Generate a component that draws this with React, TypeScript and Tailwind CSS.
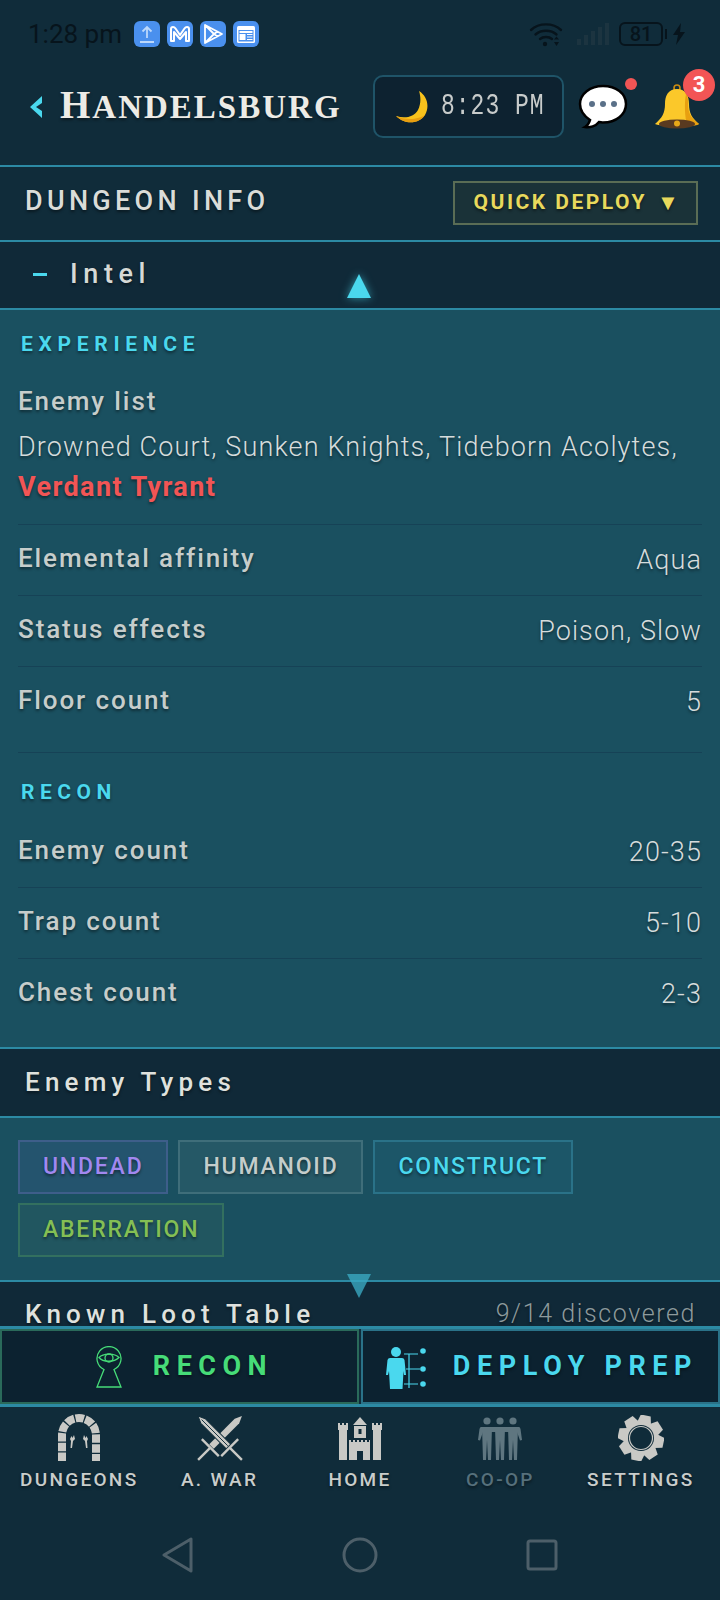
import React from 'react';

const ui = "font-['Roboto',sans-serif]";
const shadow = '[text-shadow:0_2px_3px_rgba(0,0,0,0.45)]';

const StatusApps = () => (
  <div className="flex gap-[7px] ml-[12px]">
    <div className="w-[26px] h-[26px] rounded-[6px] bg-[#4a90ee] flex items-center justify-center">
      <svg width="20" height="20" viewBox="0 0 20 20" fill="none" stroke="#bcd8fb" strokeWidth="1.8">
        <path d="M10 14V3M5.5 7.5 10 3l4.5 4.5M3 18h14" />
      </svg>
    </div>
    <div className="w-[26px] h-[26px] rounded-[6px] bg-[#4a90ee] flex items-center justify-center">
      <svg width="22" height="20" viewBox="0 0 22 20" fill="none" stroke="#fff" strokeWidth="2" strokeLinejoin="round">
        <path d="M2 17V5q0-2 2-2 1.500 0 2.500 1.500L11 11l4.500-6.500Q16.500 3 18 3q2 0 2 2v12h-3V8l-6 7-6-7v9z" />
      </svg>
    </div>
    <div className="w-[26px] h-[26px] rounded-[6px] bg-[#4a90ee] flex items-center justify-center">
      <svg width="22" height="24" viewBox="0 0 22 24" fill="none" stroke="#fff" strokeWidth="1.8" strokeLinejoin="round">
        <path d="M3 3v18l17-9zM3 3l9 9-9 9M12 12l3.500-2.500M12 12l3.500 2.500" />
      </svg>
    </div>
    <div className="w-[26px] h-[26px] rounded-[6px] bg-[#4a90ee] flex items-center justify-center">
      <svg width="20" height="20" viewBox="0 0 20 20">
        <rect x="1" y="2" width="18" height="17" rx="1.500" fill="#fff" />
        <rect x="2.500" y="6" width="15" height="11.500" fill="#4a90ee" />
        <rect x="3.500" y="7" width="13" height="2" fill="#fff" />
        <rect x="3.500" y="10" width="6" height="6" fill="#fff" />
        <path d="M11 10.500h5.500M11 13h5.500M11 15.500h5.500" stroke="#fff" strokeWidth="1.200" />
      </svg>
    </div>
  </div>
);

const StatusRight = () => (
  <div className="flex items-center text-[#07141c]">
    <svg width="34" height="26" viewBox="0 0 34 26" fill="none" stroke="currentColor" strokeWidth="2.400" strokeLinecap="round">
      <path d="M2 9c8-7.500 22-7.500 30 0M6.500 13.500c5.500-5 15.500-5 21 0M11 18c3-2.600 9-2.600 12 0" />
      <circle cx="16" cy="23" r="2.200" fill="currentColor" stroke="none" />
      <path d="M25 18.500h5l-2.500-3zM25 21h5l-2.500 4z" fill="currentColor" stroke="none" />
    </svg>
    <svg width="34" height="22" viewBox="0 0 34 22" className="ml-[14px]" fill="#1c3440">
      <rect x="0" y="16" width="4" height="6" />
      <rect x="7" y="12" width="4" height="10" />
      <rect x="14" y="8" width="4" height="14" />
      <rect x="21" y="4" width="4" height="18" />
      <rect x="28" y="0" width="4" height="22" />
    </svg>
    <div className="ml-[8px] w-[44px] h-[24px] rounded-[6px] border-[2.500px] border-[#07141c] flex items-center justify-center text-[20px] font-medium leading-none">81</div>
    <div className="w-[2px] h-[10px] bg-[#07141c] ml-[2px]" />
    <svg width="14" height="22" viewBox="0 0 14 22" className="ml-[5px]" fill="currentColor">
      <path d="M9 0 1 12h5l-2 10 9-13H8z" />
    </svg>
  </div>
);

const Moon = () => (
  <svg width="36" height="34" viewBox="0 0 36 34">
    <path d="M24 1c8 5 11 15 6 24-5 8-19 11-29 1 9 3 18 1 22-6 3-6 3-13 1-19z" fill="#f8c21c" />
    <path d="M30 25c-5 8-19 11-29 1 10 5 24 3 29-1z" fill="#e89e10" />
  </svg>
);

const ChatBubble = () => (
  <svg width="50" height="46" viewBox="0 0 50 46">
    <path d="M25 2C12 2 2 10 2 20c0 7 4 12 10 16-1 3-3 6-5 7 5 1 11-1 14-5 1 0 3 .5 4 .5 13 0 23-8 23-18.500S38 2 25 2z" fill="#fff" stroke="#000" strokeWidth="2.500" />
    <circle cx="14" cy="20" r="3" fill="#5a7088" />
    <circle cx="25" cy="20" r="3" fill="#5a7088" />
    <circle cx="36" cy="20" r="3" fill="#5a7088" />
  </svg>
);

const Bell = () => (
  <svg width="46" height="46" viewBox="0 0 46 46">
    <circle cx="23" cy="4" r="3" fill="none" stroke="#c98a10" strokeWidth="1.600" />
    <path d="M23 5c-9 0-12 7-12 15 0 9-3 14-10 20 6 3 38 3 44 0-7-6-10-11-10-20 0-8-3-15-12-15z" fill="#fbc82a" />
    <path d="M32 10c2 3 2 6 2 10 0 9 3 14 11 20-3 2-9 2-12 2-2-9-3-22-1-32z" fill="#e8a010" />
    <ellipse cx="23" cy="40" rx="18" ry="4.500" fill="#5a3a20" />
    <circle cx="23" cy="39.500" r="3" fill="#e8a818" />
  </svg>
);

const Row = ({ label, value, last }: { label: string; value: string; last?: boolean }) => (
  <div className={`flex justify-between items-center h-[71px] ${last ? '' : 'border-b border-[#164256]'} ${shadow}`}>
    <span className="mb-[4px] text-[26px] font-medium tracking-[1.9px] text-[#c6cdcb]">{label}</span>
    <span className="text-[27px] font-light tracking-[1.1px] text-[#d6dcdc]">{value}</span>
  </div>
);

const Tag = ({ label, cls }: { label: string; cls: string }) => (
  <span className={`h-[54px] px-[23px] flex items-center border-2 text-[23px] font-medium tracking-[1.8px] ${shadow} ${cls}`}>{label}</span>
);

const DungeonIcon = () => (
  <svg width="50" height="48" viewBox="0 0 48 48" fill="none">
    <path d="M7 47V21A17 17 0 0 1 41 21V47" stroke="#c9c9c5" strokeWidth="8" strokeDasharray="8.500 1.300" />
    <path d="M15 25l1.500-3 1 2 1.500-3 1 4-2 2-1 7h-1.500l.5-7zM33 25l-1.500-3-1 2-1.500-3-1 4 2 2 1 7h1.500l-.5-7z" fill="#c9c9c5" />
  </svg>
);

const Sword = ({ angle, front }: { angle: number; front?: boolean }) => (
  <g transform={`rotate(${angle})`}>
    <path d="M0-31 3.200-24V12H-3.200V-24z" fill="#c9c9c5" stroke={front ? '#102c3a' : 'none'} strokeWidth={front ? 1 : 0} />
    {front && <path d="M0-26V11" stroke="#102c3a" strokeWidth="0.900" />}
    <rect x="-12" y="12.500" width="24" height="2.400" fill="#c9c9c5" />
    <rect x="-1.200" y="14" width="2.400" height="17" fill="#c9c9c5" />
  </g>
);

const SwordsIcon = () => (
  <svg width="46" height="46" viewBox="-23 -23 46 46">
    <Sword angle={45} />
    <Sword angle={-45} front />
  </svg>
);

const CastleIcon = () => (
  <svg width="46" height="46" viewBox="0 0 46 46" fill="#c9c9c5">
    <path d="M16 10 23 2l7 8z" />
    <path d="M17 11h12v12h-12z" />
    <path d="M1 8h2v2h2V8h2v2h2V8h2v7h-1v30H2V15H1z" />
    <path d="M35 8h2v2h2V8h2v2h2V8h2v7h-1v30h-8V15h-1z" />
    <path d="M12 25h2v2h2v-2h2v2h2v-2h2v2h2v-2h2v2h2v-2h2v2h2v-2h1v20H12z" />
    <rect x="20" y="36" width="6" height="9" fill="#102c3a" />
    <rect x="21.500" y="14" width="3" height="5" fill="#102c3a" />
  </svg>
);

const CoopIcon = () => (
  <svg width="44" height="44" viewBox="0 0 44 44" fill="#5f7680">
    {[9, 22, 35].map(x => (
      <g key={x}>
        <circle cx={x} cy="5" r="3.600" />
        <path d={`M${x - 5} 11h10l-1 33h-3l-1-20-1 20h-3z`} />
      </g>
    ))}
    <path d="M3 11h38q1 0 1.500 2l1.500 11-2 .5L39 16H5L2 24.500 0 24l1.500-11Q2 11 3 11z" />
  </svg>
);

const GearIcon = () => (
  <svg width="46" height="46" viewBox="-23 -23 46 46">
    {[0, 45, 90, 135, 180, 225, 270, 315].map(a => (
      <path key={a} d="M-5-23h10l2 8h-14z" fill="#c9c9c5" transform={`rotate(${a + 12})`} />
    ))}
    <circle r="17" fill="#c9c9c5" />
    <circle r="13" fill="#102c3a" />
    <circle r="11.500" fill="none" stroke="#c9c9c5" strokeWidth="1.200" />
  </svg>
);

const KeyholeEye = () => (
  <svg width="26" height="42" viewBox="0 0 26 42" fill="none" stroke="#46dc78" strokeWidth="1.300">
    <path d="M8 23.500A12 12 0 1 1 18 23.500L25 41H1z" />
    <path d="M3 11.500c4-4 15-5 20 0-5 5-16 5-20 0z" />
    <circle cx="13" cy="12" r="4" />
  </svg>
);

const DeployIcon = () => (
  <svg width="42" height="44" viewBox="0 0 42 44">
    <circle cx="10" cy="7" r="5" fill="#4ad8ee" />
    <path d="M4 13h12q2 0 2.500 2L20 30h-2l-.5-4-1 18H4l-1-18-1 4H0l1.500-15Q2 13 4 13z" fill="#4ad8ee" />
    <path d="M18 9h14M23 9v34M20 24h14M18 39h14" stroke="#4ad8ee" strokeWidth="1.200" fill="none" />
    <circle cx="37" cy="6" r="2.800" fill="#4ad8ee" />
    <circle cx="37" cy="24" r="2.800" fill="#4ad8ee" />
    <circle cx="37" cy="39" r="2.800" fill="#4ad8ee" />
  </svg>
);

const NavItem = ({ icon, label, muted }: { icon: React.ReactNode; label: string; muted?: boolean }) => (
  <div className="flex-1 flex flex-col items-center">
    <div className="h-[50px] flex items-center justify-center">{icon}</div>
    <span className={`mt-[3px] text-[19px] font-medium tracking-[2.3px] ${shadow} ${muted ? 'text-[#56707b]' : 'text-[#c9cdcb]'}`}>{label}</span>
  </div>
);

export default function App() {
  return (
    <div className={`${ui} w-[720px] h-[1600px] bg-[#102c3a] flex flex-col overflow-hidden relative`}>
      {/* system status bar */}
      <div className="h-[60px] pt-[8px] pl-[28px] pr-[34px] flex items-center justify-between">
        <div className="flex items-center">
          <span className="text-[26px] text-[#07141c]">1:28 pm</span>
          <StatusApps />
        </div>
        <StatusRight />
      </div>

      {/* town header */}
      <div className="h-[107px] pb-[12px] border-b-2 border-[#2c8aa4] flex items-center pl-[30px] relative">
        <svg width="12" height="22" viewBox="0 0 12 22" fill="#4ad8ee">
          <path d="M12 0v7L6 11l6 4v7L0 11z" />
        </svg>
        <h1 className={`ml-[18px] mb-[4px] font-['Liberation_Serif',serif] font-bold text-[33px] tracking-[2px] leading-none text-[#ecebe6] ${shadow}`}><span className="text-[39px]">H</span>ANDELSBURG</h1>
        <div className="ml-auto mr-[14px] w-[191px] h-[63px] rounded-[10px] border-2 border-[#1f5468] bg-[#0d2230] flex items-center pl-[20px]">
          <Moon />
          <span className="ml-[10px] font-['Liberation_Mono',monospace] text-[23px] tracking-[1px] scale-y-130 text-[#c8cccb] whitespace-nowrap">8:23 PM</span>
        </div>
        <div className="relative mr-[26px]">
          <ChatBubble />
          <span className="absolute -top-[6px] -right-[9px] w-[12px] h-[12px] rounded-full bg-[#f25555]" />
        </div>
        <div className="relative mr-[20px]">
          <Bell />
          <span className="absolute -top-[15px] -right-[15px] w-[32px] h-[32px] rounded-full bg-[#f25555] flex items-center justify-center text-white text-[22px] font-bold">3</span>
        </div>
      </div>

      {/* section title */}
      <div className="h-[75px] pb-[1px] border-b-2 border-[#2c8aa4] flex items-center justify-between pl-[25px] pr-[22px]">
        <h2 className={`mb-[4px] text-[27px] font-medium tracking-[4.3px] text-[#dadcd8] ${shadow}`}>DUNGEON INFO</h2>
        <button className={`w-[245px] h-[44px] pl-[4px] border-2 border-[#5a6d55] bg-[#1a3238] flex items-center justify-center text-[21px] font-bold tracking-[2.5px] text-[#e8d95c] ${shadow}`}>QUICK DEPLOY<span className="ml-[10px] text-[22px] leading-none">▼</span></button>
      </div>

      {/* intel accordion */}
      <div className="h-[68px] pb-[1px] border-b-2 border-[#2c8aa4] flex items-center pl-[33px] bg-[#102938]">
        <span className="w-[14px] h-[3px] bg-[#4ad8ee]" />
        <span className={`ml-[23px] text-[27px] font-medium tracking-[5.6px] text-[#d6d9d6] ${shadow}`}>Intel</span>
      </div>

      <div className="h-[739px] bg-[#1a5060] px-[18px] pt-[18px] border-b-2 border-[#2c8aa4]">
        <div className={`pl-[3px] h-[34px] flex items-center text-[21px] font-bold tracking-[5.7px] text-[#4ad8ee] ${shadow}`}>EXPERIENCE</div>
        <div className="border-b border-[#164256] pb-[16px] pt-[19px]">
          <div className={`text-[26px] font-medium tracking-[1.9px] leading-[40px] text-[#c6cdcb] ${shadow}`}>Enemy list</div>
          <div className={`text-[27px] font-light tracking-[1.15px] leading-[40px] mt-[6px] text-[#d6dcdc] whitespace-nowrap ${shadow}`}>Drowned Court, Sunken Knights, Tideborn Acolytes,</div>
          <div className={`text-[27px] font-bold tracking-[1.4px] leading-[41px] text-[#f25555] ${shadow}`}>Verdant Tyrant</div>
        </div>
        <Row label="Elemental affinity" value="Aqua" />
        <Row label="Status effects" value="Poison, Slow" />
        <Row label="Floor count" value="5" last />
        <div className="border-t border-[#164256] mt-[14px] h-[78px] pt-[3px] flex items-center pl-[3px]">
          <span className={`text-[21px] font-bold tracking-[5.5px] text-[#4ad8ee] ${shadow}`}>RECON</span>
        </div>
        <div className="-mt-[13px]">
          <Row label="Enemy count" value="20-35" />
          <Row label="Trap count" value="5-10" />
          <Row label="Chest count" value="2-3" last />
        </div>
      </div>

      <div className="h-[69px] border-b-2 border-[#2c8aa4] bg-[#102938] flex items-center pl-[25px]">
        <h3 className={`text-[26px] font-medium tracking-[5.2px] text-[#dfe1dd] ${shadow}`}>Enemy Types</h3>
      </div>

      <div className="h-[164px] border-b-2 border-[#2c8aa4] bg-[#1a5060] px-[18px] pt-[22px] flex flex-wrap gap-x-[10px] gap-y-[9px] content-start">
        <Tag label="UNDEAD" cls="border-[#3e5e8a] bg-[#24546e] text-[#a188f0]" />
        <Tag label="HUMANOID" cls="border-[#3f6e7a] bg-[#255866] text-[#c4cdcb]" />
        <Tag label="CONSTRUCT" cls="border-[#2a7288] bg-[#1c5668] text-[#4ad8ee]" />
        <Tag label="ABERRATION" cls="border-[#33705f] bg-[#215660] text-[#84bf54]" />
      </div>

      {/* next section header, its lower part runs under the action bar */}
      <div className="h-[44px] overflow-hidden bg-[#102938] flex justify-between pl-[25px] pr-[24px] pt-[14px]">
        <h3 className={`text-[26px] font-medium tracking-[5.2px] leading-[36px] text-[#dfe1dd] whitespace-nowrap ${shadow}`}>Known Loot Table</h3>
        <span className={`text-[25px] font-light tracking-[1.6px] leading-[36px] text-[#8d9a9c] whitespace-nowrap ${shadow}`}>9/14 discovered</span>
      </div>

      {/* action buttons */}
      <div className="h-[81px] flex border-y-[3px] border-[#2c8aa4] gap-[2px]">
        <button className="w-[359px] pl-[10px] border-2 border-[#2a6a5a] bg-[#0c2230] flex items-center justify-center">
          <KeyholeEye />
          <span className={`ml-[31px] text-[27px] font-bold tracking-[6.5px] text-[#46dc78] ${shadow}`}>RECON</span>
        </button>
        <button className="flex-1 pl-[3px] border-2 border-[#2a7288] bg-[#0c2230] flex items-center justify-center">
          <DeployIcon />
          <span className={`ml-[25px] text-[27px] font-bold tracking-[6.6px] text-[#4ad8ee] whitespace-nowrap ${shadow}`}>DEPLOY PREP</span>
        </button>
      </div>

      {/* bottom nav */}
      <div className="flex pt-[6px] px-[9px]">
        <NavItem icon={<DungeonIcon />} label="DUNGEONS" />
        <NavItem icon={<SwordsIcon />} label="A. WAR" />
        <NavItem icon={<CastleIcon />} label="HOME" />
        <NavItem icon={<CoopIcon />} label="CO-OP" muted />
        <NavItem icon={<GearIcon />} label="SETTINGS" />
      </div>

      {/* android nav keys */}
      <div className="flex-1 flex items-center justify-center gap-[148px] pt-[16px]">
        <svg width="32" height="36" viewBox="0 0 32 36" fill="none" stroke="#4d5f69" strokeWidth="3" strokeLinejoin="round">
          <path d="M29 2v32L2 18z" />
        </svg>
        <svg width="36" height="36" viewBox="0 0 36 36" fill="none" stroke="#4d5f69" strokeWidth="3">
          <circle cx="18" cy="18" r="16" />
        </svg>
        <svg width="32" height="32" viewBox="0 0 32 32" fill="none" stroke="#4d5f69" strokeWidth="3" strokeLinejoin="round">
          <rect x="2" y="2" width="28" height="28" rx="2" />
        </svg>
      </div>

      {/* scroll hints sitting over the section borders */}
      <div className="absolute left-[347px] top-[274px] w-0 h-0 border-x-[12px] border-x-transparent border-b-[24px] border-b-[#4ad8ee] [filter:drop-shadow(0_0_4px_rgba(74,216,238,0.6))]" />
      <div className="absolute left-[347px] top-[1274px] w-0 h-0 border-x-[12px] border-x-transparent border-t-[24px] border-t-[#3aa8c0] opacity-80" />
    </div>
  );
}
